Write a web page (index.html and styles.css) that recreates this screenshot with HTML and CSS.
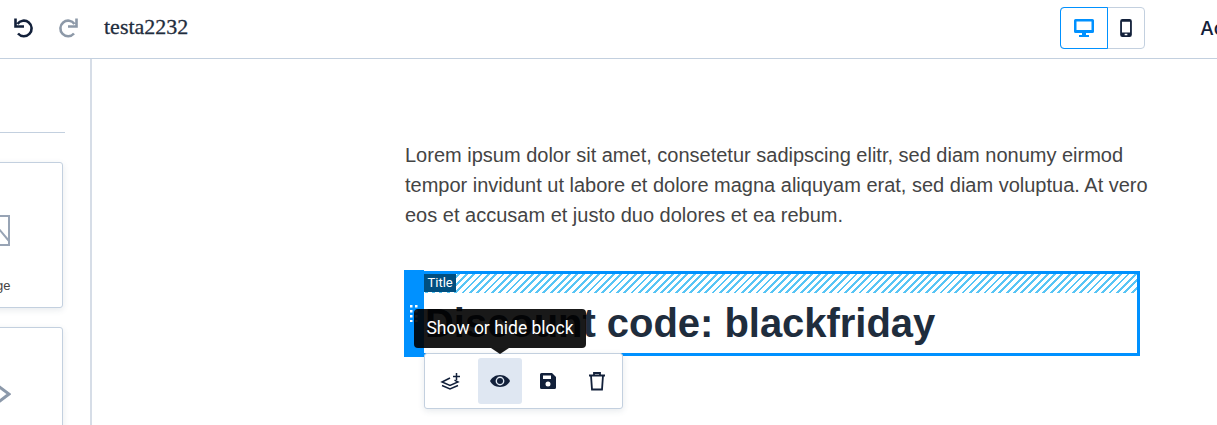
FILE: index.html
```html
<!DOCTYPE html>
<html lang="en">
<head>
  <meta charset="UTF-8">
  <meta name="viewport" content="width=device-width, initial-scale=1.0">
  <title>testa2232</title>
  <link rel="stylesheet" href="styles.css">
</head>
<body>
  <header class="topbar">
    <div class="history">
      <svg class="history-icon" viewBox="0 0 24 24"><path d="M3.500 3.500v8H12M5.500 9A7.750 7.750 0 1 1 6 18.500" fill="none" stroke="#12203a" stroke-width="2.600"/></svg>
      <svg class="history-icon" viewBox="0 0 24 24"><path d="M20.500 3.500v8H12M18.500 9A7.750 7.750 0 1 0 18 18.500" fill="none" stroke="#8d99a8" stroke-width="2.600"/></svg>
    </div>
    <div class="doc-name">testa2232</div>
    <div class="device-switch">
      <button class="device device-active">
        <svg width="22" height="18" viewBox="0 0 22 18"><path d="M2.500 0h17A1.500 1.500 0 0 1 21 1.500v11a1.500 1.500 0 0 1-1.500 1.500H13v2h3v2H6v-2h3v-2H2.500A1.500 1.500 0 0 1 1 12.500v-11A1.500 1.500 0 0 1 2.500 0zM3.500 2.500V11h15V2.500z" fill="#0091ff" fill-rule="evenodd"/></svg>
      </button>
      <button class="device">
        <svg width="12" height="18" viewBox="0 0 13 20"><path d="M2.500 0h8A2.500 2.500 0 0 1 13 2.500v15a2.500 2.500 0 0 1-2.500 2.500h-8A2.500 2.500 0 0 1 0 17.500v-15A2.500 2.500 0 0 1 2.500 0zM2 3v12h9V3zM5 16.500V18h3v-1.500z" fill="#12203a" fill-rule="evenodd"/></svg>
      </button>
    </div>
    <div class="actions-label">Actions</div>
  </header>

  <div class="workspace">
    <aside class="sidebar">
      <div class="side-rule"></div>
      <div class="side-card side-card-image">
        <svg width="34" height="31" viewBox="0 0 34 31"><path d="M1 1h32v29H1zM12 1l21 25" fill="none" stroke="#98a4b5" stroke-width="2"/></svg>
        <span class="side-card-label">Image</span>
      </div>
      <div class="side-card side-card-code">
        <svg width="36" height="24" viewBox="0 0 36 24"><path d="M22 3l12 9-12 9M14 3 2 12l12 9" fill="none" stroke="#8c99aa" stroke-width="3"/></svg>
      </div>
    </aside>

    <main class="canvas">
      <p class="lorem">Lorem ipsum dolor sit amet, consetetur sadipscing elitr, sed diam nonumy eirmod tempor invidunt ut labore et dolore magna aliquyam erat, sed diam voluptua. At vero eos et accusam et justo duo dolores et ea rebum.</p>

      <section class="block">
        <div class="drag-handle">
          <svg width="8" height="17" viewBox="0 0 8 17"><path d="M0 0h2.500v2.500H0zM5 0h2.500v2.500H5zM0 5h2.500v2.500H0zM5 5h2.500v2.500H5zM0 10h2.500v2.500H0zM5 10h2.500v2.500H5zM0 15h2.500v2H0zM5 15h2.500v2H5z" fill="#fff"/></svg>
        </div>
        <div class="block-frame">
          <div class="stripes"><span class="block-tag">Title</span></div>
          <h1 class="block-title">Discount code: blackfriday</h1>
        </div>

        <div class="tooltip">Show or hide block</div>

        <div class="toolbar">
          <button class="tool">
            <svg width="22" height="22" viewBox="0 0 22 22"><g fill="none" stroke="#12203a" stroke-width="1.500"><path d="M10 8 2 12l8 3.500 8-3.500-3.500-1.800"/><path d="M2 15.500 10 19l8-3.500"/><path d="M16.500 3v7M13 6.500h7"/></g></svg>
          </button>
          <button class="tool tool-active">
            <svg width="22" height="22" viewBox="0 0 22 22"><path d="M11 5c5 0 8.500 3 10 6-1.500 3-5 6-10 6S2.500 14 1 11c1.500-3 5-6 10-6z" fill="#12203a"/><circle cx="11" cy="11" r="4.400" fill="#dfe7f2"/><circle cx="11" cy="11" r="3" fill="#12203a"/></svg>
          </button>
          <button class="tool tool-save">
            <svg width="22" height="22" viewBox="0 0 22 22"><path d="M4.500 3H15l4 4v10.500a1.500 1.500 0 0 1-1.500 1.500h-13A1.500 1.500 0 0 1 3 17.500v-13A1.500 1.500 0 0 1 4.500 3zM6 5.500V9h8V5.500zM11 11.500a2.500 2.500 0 1 0 0 5 2.500 2.500 0 0 0 0-5z" fill="#12203a" fill-rule="evenodd"/></svg>
          </button>
          <button class="tool tool-save">
            <svg width="22" height="22" viewBox="0 0 22 22"><path d="M3 5.500h16M8 5V3h6v2M5 5.500l1 14h10l1-14" fill="none" stroke="#12203a" stroke-width="1.800"/></svg>
          </button>
        </div>
      </section>
    </main>
  </div>
</body>
</html>
```

FILE: styles.css
```css
html, body {
  height: 100%;
}
body {
  margin: 0;
  overflow: hidden;
  background-color: #ffffff;
  font-family: "Liberation Sans", Arial, sans-serif;
  color: #12203a;
}
.topbar {
  display: flex;
  align-items: center;
  height: 56px;
  border-bottom: 1px solid #c3d0df;
  padding: 0 0 2px 12px;
  white-space: nowrap;
}
.history {
  display: flex;
  gap: 20px;
  margin-bottom: 2px;
}
.history-icon {
  width: 24px;
  height: 24px;
}
.doc-name {
  margin: 0 0 2px 24px;
  font-family: "Liberation Serif", serif;
  font-size: 22px;
  -webkit-text-stroke: 0.3px #1f2d3d;
  color: #1f2d3d;
}
.device-switch {
  display: flex;
  margin-left: auto;
  height: 42px;
  border: 1px solid #c3d0df;
  border-radius: 4px;
  box-sizing: border-box;
}
.device {
  display: flex;
  align-items: center;
  justify-content: center;
  width: 36px;
  margin: -1px 0;
  padding: 0;
  border: 1px solid transparent;
  background: none;
}
.device-active {
  width: 48px;
  margin-left: -1px;
  border-color: #0091ff;
  border-radius: 4px 0 0 4px;
}
.actions-label {
  margin-left: 55px;
  margin-right: -52px;
  font-size: 19px;
  font-weight: 500;
  color: #12203a;
  font-family: Inter, sans-serif;
}
.workspace {
  display: flex;
  height: 366px;
}
.sidebar {
  flex: none;
  width: 90px;
  border-right: 2px solid #d6dde7;
  overflow: hidden;
}
.side-rule {
  width: 65px;
  margin-top: 73px;
  border-top: 1px solid #c3d0df;
}
.side-card {
  width: 141px;
  margin: 29px 0 0 -78px;
  background: #fff;
  border: 1px solid #c3d0df;
  border-radius: 3px;
  box-shadow: 0 2px 6px rgba(60, 80, 110, 0.12);
  box-sizing: border-box;
}
.side-card-image {
  display: flex;
  flex-direction: column;
  align-items: center;
  height: 146px;
  padding-top: 52px;
}
.side-card-label {
  margin-top: 30px;
  font-size: 13px;
  color: #444;
  line-height: 20px;
}
.side-card-code {
  display: flex;
  justify-content: center;
  height: 200px;
  margin-top: 19px;
  padding-top: 54px;
}
.canvas {
  flex: 1;
  padding: 81px 0 0 313px;
}
.lorem {
  width: 750px;
  margin: 0 0 40px;
  font-size: 20px;
  line-height: 30px;
  color: #444444;
}
.block {
  position: relative;
  display: flex;
  width: 736px;
  height: 87px;
  margin-left: -1px;
}
.drag-handle {
  display: flex;
  justify-content: center;
  flex: none;
  width: 20px;
  padding-top: 35px;
  background: #0091ff;
  box-sizing: border-box;
}
.block-frame {
  flex: 1;
  margin-top: 1px;
  height: 85px;
  border: 3px solid #0091ff;
  border-left-width: 0;
  box-sizing: border-box;
  overflow: hidden;
}
.stripes {
  height: 19px;
  background: repeating-linear-gradient(135deg, #ffffff 0, #ffffff 3.200px, #58c5f5 3.200px, #58c5f5 5.200px);
}
.block-tag {
  display: inline-block;
  height: 18px;
  padding: 0 3.500px;
  background: #004f80;
  color: #fff;
  font-family: Roboto, sans-serif;
  font-size: 13px;
  line-height: 18px;
  vertical-align: top;
}
.block-title {
  margin: 5px 0 0 1px;
  font-size: 40px;
  line-height: 50px;
  font-weight: bold;
  letter-spacing: -0.04px;
  color: #1f2d3d;
  white-space: nowrap;
}
.tooltip {
  position: absolute;
  left: 10px;
  top: 39px;
  width: 172px;
  height: 39px;
  background: rgba(0, 0, 0, 0.9);
  border-radius: 4px;
  color: #fff;
  font-family: Roboto, sans-serif;
  font-size: 17.500px;
  line-height: 39px;
  text-align: center;
  z-index: 3;
}
.tooltip::after {
  content: "";
  position: absolute;
  left: 77px;
  top: 39px;
  border: 9px solid transparent;
  border-top: 6px solid #171717;
  border-bottom: 0;
}
.toolbar {
  position: absolute;
  left: 20px;
  top: 83px;
  display: flex;
  gap: 5px;
  width: 199px;
  height: 56px;
  padding: 4px 0 0 4px;
  background: #fff;
  border: 1px solid #c3d0df;
  border-radius: 3px;
  box-shadow: 0 2px 6px rgba(60, 80, 110, 0.12);
  box-sizing: border-box;
  z-index: 2;
}
.tool {
  display: flex;
  align-items: center;
  justify-content: center;
  width: 44px;
  height: 46px;
  padding: 0;
  border: none;
  border-radius: 3px;
  background: none;
}
.tool-active {
  background: #dfe7f2;
}
.tool-save svg {
  margin-left: -2px;
}
```
